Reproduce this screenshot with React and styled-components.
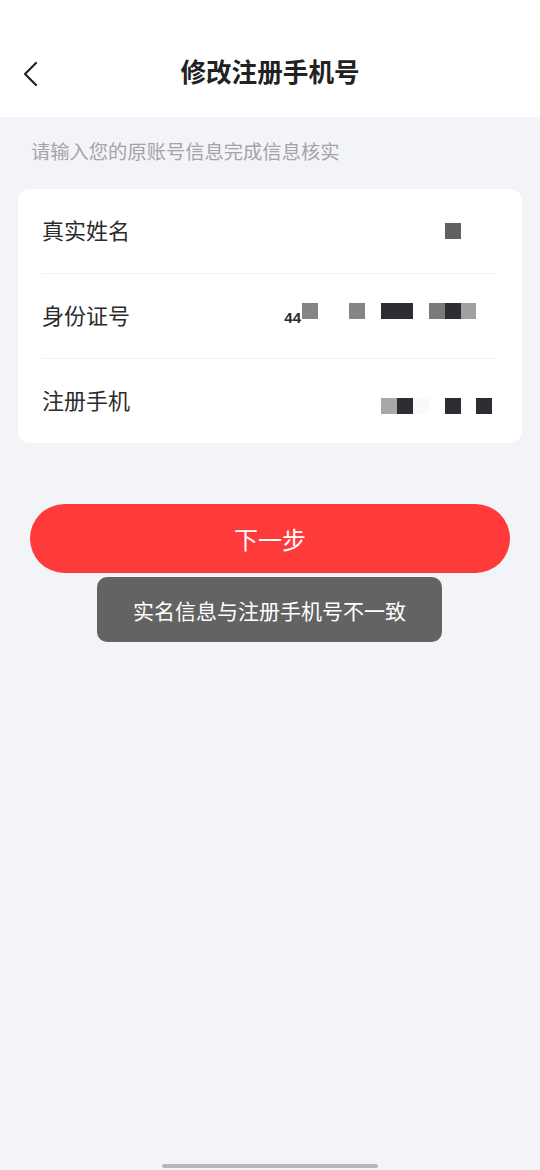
import React from "react";
import styled, { createGlobalStyle } from "styled-components";

const GlobalStyle = createGlobalStyle`
  html, body {
    margin: 0;
    padding: 0;
    background: #f3f4f8;
  }
  body {
    font-family: "Noto Sans CJK SC", "Noto Sans", sans-serif;
  }
`;

export const Page = styled.div`
  width: 540px;
  height: 1170px;
  background: #f3f4f8;
  display: flex;
  flex-direction: column;
  position: relative;
  overflow: hidden;
`;

export const Header = styled.div`
  height: 117px;
  background: #fff;
  display: flex;
  align-items: flex-end;
  padding-bottom: 26px;
  box-sizing: border-box;
  position: relative;
  .back {
    position: absolute;
    left: 20px;
    top: 58px;
  }
`;

export const Title = styled.div`
  flex: 1;
  text-align: center;
  font-size: 25.6px;
  font-weight: 700;
  color: #222;
  line-height: 36px;
  margin-bottom: 2px;
`;

export const Hint = styled.div`
  font-size: 19.3px;
  color: #a3a3a8;
  padding: 22px 0 0 31px;
  line-height: 24px;
`;

export const Card = styled.div`
  margin: 26px 18px 0 18px;
  background: #fff;
  border-radius: 12px;
  padding: 0 24px;
`;

export const Row = styled.div`
  height: 84px;
  display: flex;
  align-items: center;
  justify-content: space-between;
  border-bottom: ${({ $last }) => ($last ? "none" : "1px solid #f0f0f2")};
  .label {
    font-size: 22px;
    color: #2b2b2b;
    margin-top: -4px;
  }
`;

export const Mask = styled.div`
  display: flex;
  align-items: flex-end;
  margin-right: ${({ $right }) => $right}px;
  transform: translateY(${({ $dy }) => $dy}px);
  .digits {
    font-family: "Liberation Sans", sans-serif;
    font-weight: 700;
    font-size: 15px;
    color: #2b2b2b;
    margin-bottom: -7px;
    margin-right: 1px;
  }
`;

export const Pixel = styled.span`
  display: block;
  width: ${({ $w }) => $w}px;
  height: 16px;
  background: ${({ $c }) => $c};
  margin-left: ${({ $gap }) => $gap || 0}px;
`;

export const NextButton = styled.button`
  margin: 61px 30px 0 30px;
  height: 69px;
  border: none;
  border-radius: 35px;
  background: #ff3a3a;
  color: #fff;
  font-family: inherit;
  font-size: 24px;
  display: flex;
  align-items: center;
  justify-content: center;
`;

export const Toast = styled.div`
  align-self: center;
  margin-top: 4px;
  margin-left: -1px;
  width: 345px;
  height: 65px;
  border-radius: 10px;
  background: #636363;
  color: #fff;
  font-size: 21px;
  display: flex;
  align-items: center;
  justify-content: center;
`;

export const HomeBar = styled.div`
  position: absolute;
  left: 162px;
  bottom: 2px;
  width: 216px;
  height: 4px;
  border-radius: 2px;
  background: #b8b8bc;
`;

const BackIcon = () => (
  <svg className="back" width="24" height="32" viewBox="0 0 24 32">
    <path d="M16 5 L5 16 L16 27" fill="none" stroke="#222" strokeWidth="2.2" strokeLinecap="round" strokeLinejoin="round" />
  </svg>
);

const rows = [
  {
    label: "真实姓名",
    right: 37,
    dy: 0,
    pixels: [{ w: 16, c: "#606060" }],
  },
  {
    label: "身份证号",
    right: 22,
    dy: -5,
    digits: "44",
    pixels: [
      { w: 16, c: "#858585" },
      { w: 16, c: "#858585", gap: 31 },
      { w: 32, c: "#2e2d32", gap: 16 },
      { w: 16, c: "#7a7a7a", gap: 16 },
      { w: 16, c: "#2e2d32" },
      { w: 15, c: "#a0a0a0" },
    ],
  },
  {
    label: "注册手机",
    right: 6,
    dy: 5,
    pixels: [
      { w: 16, c: "#a8a8a8" },
      { w: 16, c: "#2e2d32" },
      { w: 16, c: "#fafafa" },
      { w: 16, c: "#2e2d32", gap: 16 },
      { w: 16, c: "#2e2d32", gap: 15 },
    ],
  },
];

function App() {
  return (
    <>
      <GlobalStyle />
      <Page>
        <Header>
          <BackIcon />
          <Title>修改注册手机号</Title>
        </Header>
        <Hint>请输入您的原账号信息完成信息核实</Hint>
        <Card>
          {rows.map((row, i) => (
            <Row key={row.label} $last={i === rows.length - 1}>
              <div className="label">{row.label}</div>
              <Mask $right={row.right} $dy={row.dy}>
                {row.digits ? <span className="digits">{row.digits}</span> : null}
                {row.pixels.map((p, j) => (
                  <Pixel key={j} $w={p.w} $c={p.c} $gap={p.gap} />
                ))}
              </Mask>
            </Row>
          ))}
        </Card>
        <NextButton>下一步</NextButton>
        <Toast>实名信息与注册手机号不一致</Toast>
        <HomeBar />
      </Page>
    </>
  );
}

export default App;
